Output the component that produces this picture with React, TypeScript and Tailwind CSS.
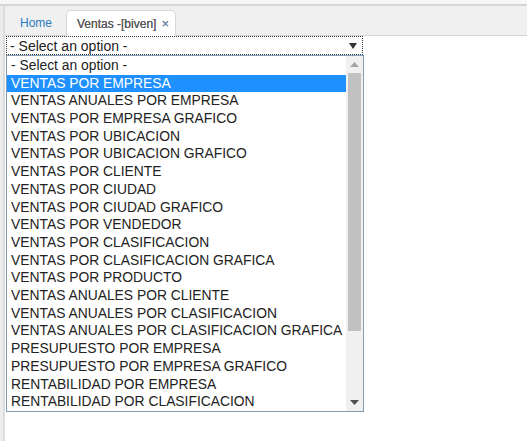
import React from 'react';

const options = [
  'VENTAS POR EMPRESA',
  'VENTAS ANUALES POR EMPRESA',
  'VENTAS POR EMPRESA GRAFICO',
  'VENTAS POR UBICACION',
  'VENTAS POR UBICACION GRAFICO',
  'VENTAS POR CLIENTE',
  'VENTAS POR CIUDAD',
  'VENTAS POR CIUDAD GRAFICO',
  'VENTAS POR VENDEDOR',
  'VENTAS POR CLASIFICACION',
  'VENTAS POR CLASIFICACION GRAFICA',
  'VENTAS POR PRODUCTO',
  'VENTAS ANUALES POR CLIENTE',
  'VENTAS ANUALES POR CLASIFICACION',
  'VENTAS ANUALES POR CLASIFICACION GRAFICA',
  'PRESUPUESTO POR EMPRESA',
  'PRESUPUESTO POR EMPRESA GRAFICO',
  'RENTABILIDAD POR EMPRESA',
  'RENTABILIDAD POR CLASIFICACION',
];

export default function App() {
  return (
    <div className="w-[527px] h-[441px] bg-[#f7f7f7] font-['Liberation_Sans',Arial,sans-serif] overflow-hidden flex flex-col">
      <div className="h-[4px] bg-[#f7f7f7]" />
      <div className="flex flex-1 border-t-2 border-[#d6d6d6]">
        <div className="w-[3px] bg-[#ececec] border-r-2 border-[#dcdcdc] box-content" />
        <div className="flex-1 flex flex-col bg-white">
          {/* tabs */}
          <div className="h-[30px] bg-[#f0f0f0] border-b border-[#d4d4d4] flex items-end pl-[1px]">
            <div className="w-[60px] h-[25px] flex items-center justify-center text-[12px] text-[#2a7bc4]">
              Home
            </div>
            <div className="h-[26px] -mb-px pl-[10px] pr-[6px] bg-white border border-b-0 border-[#d8d8d8] rounded-t-[5px] flex items-center gap-[5px] text-[12px] text-[#5a5a5a] [text-shadow:0_0_0.6px_#5a5a5a]">
              <span>Ventas -[biven]</span>
              <span className="text-[#6a8fb5] text-[13px]">×</span>
            </div>
          </div>

          {/* select */}
          <div className="pl-[1px]">
            <div className="w-[357px] h-[19px] border border-dotted border-[#333] flex items-center justify-between pl-[3px] pr-[5px] text-[14px] text-[#222] leading-none">
              <span>- Select an option -</span>
              <svg width="8" height="6" viewBox="0 0 8 6">
                <path d="M0 0 H8 L4 6 Z" fill="#333" />
              </svg>
            </div>

            {/* listbox */}
            <div className="w-[358px] h-[357px] border border-[#7f9db9] bg-white flex text-[13.85px] text-[#222] leading-none">
              <div className="flex-1 flex flex-col pt-[1px]">
                <div className="h-[17.75px] flex items-center pl-[4px]">- Select an option -</div>
                {options.map((o, i) => (
                  <div
                    key={o}
                    className={
                      i === 0
                        ? 'h-[17.75px] flex items-center pl-[4px] bg-[#1e90ff] text-white'
                        : 'h-[17.75px] flex items-center pl-[4px] whitespace-nowrap'
                    }
                  >
                    {o}
                  </div>
                ))}
              </div>
              <div className="w-[17px] bg-[#f0f0f0] flex flex-col items-center">
                <div className="h-[17px] flex items-center justify-center">
                  <svg width="9" height="5" viewBox="0 0 9 5">
                    <path d="M4.5 0 L9 5 H0 Z" fill="#a3a3a3" />
                  </svg>
                </div>
                <div className="w-[13px] h-[258px] bg-[#c1c1c1]" />
                <div className="flex-1" />
                <div className="h-[17px] flex items-center justify-center">
                  <svg width="9" height="5" viewBox="0 0 9 5">
                    <path d="M0 0 H9 L4.5 5 Z" fill="#505050" />
                  </svg>
                </div>
              </div>
            </div>
          </div>
        </div>
      </div>
    </div>
  );
}
